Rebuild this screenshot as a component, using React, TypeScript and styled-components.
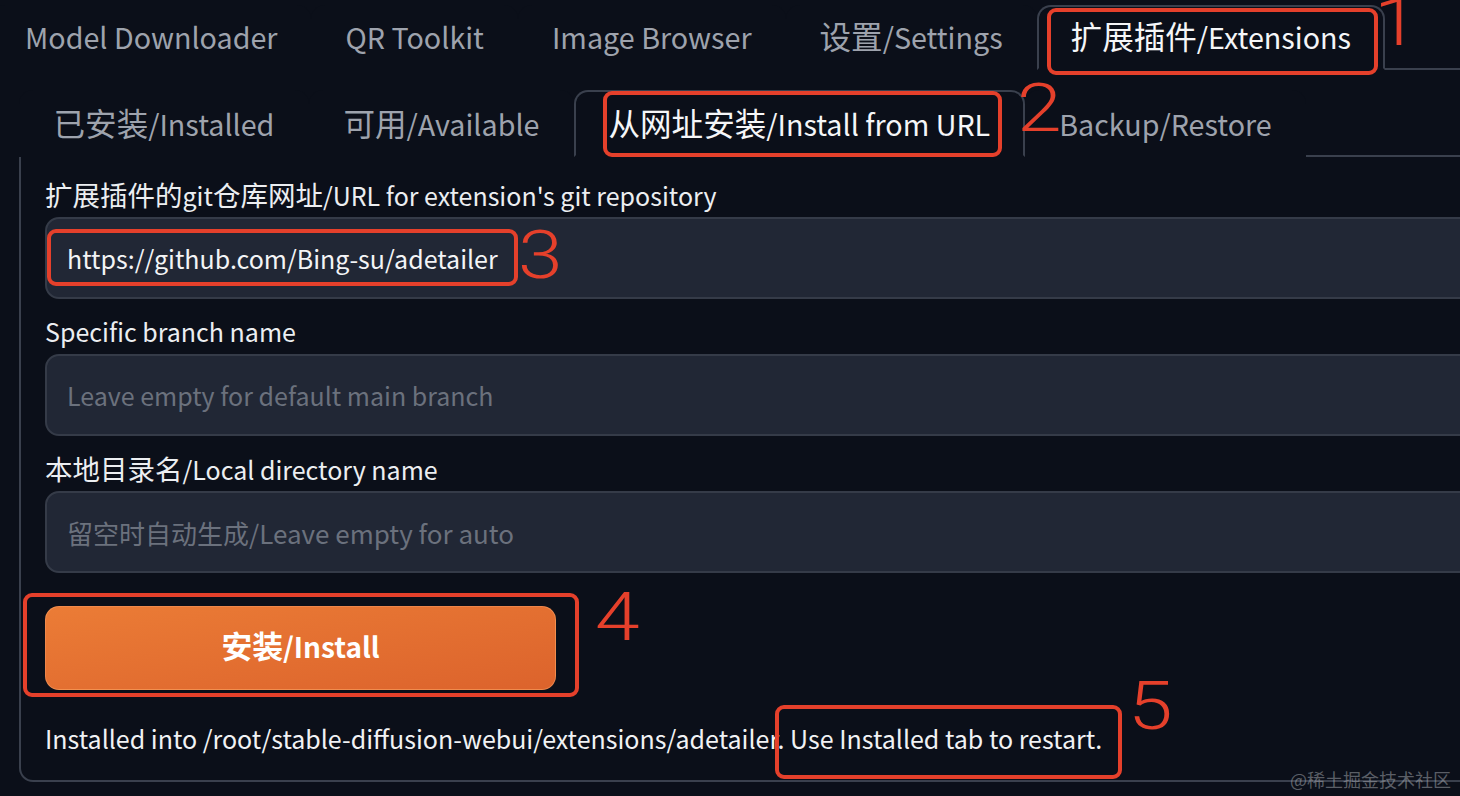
import React from "react";
import styled, { createGlobalStyle } from "styled-components";

const GlobalStyle = createGlobalStyle`
  html, body { margin: 0; padding: 0; background: #0b0f19; }
  body { font-family: "Noto Sans CJK SC", "Noto Sans", sans-serif; }
  #root { width: 1460px; height: 796px; }
`;

const Page = styled.div`
  position: relative;
  width: 1460px;
  height: 796px;
  overflow: hidden;
  background: #0b0f19;
  padding-top: 5px;
  box-sizing: border-box;
`;

const TopNav = styled.nav`
  display: flex;
  height: 63px;
  margin-left: -9px;
  border-bottom: 2px solid #3a404d;
`;

const Tab = styled.div<{ $active?: boolean; $shift: number; $pad: number }>`
  box-sizing: border-box;
  height: calc(100% + 2px);
  margin-bottom: -2px;
  padding: 0 ${(p) => p.$pad}px ${(p) => p.$shift}px;
  display: flex;
  align-items: center;
  white-space: nowrap;
  font-size: 28.7px;
  color: ${(p) => (p.$active ? "#f5f6f8" : "#9ea3ad")};
  border: 2px solid ${(p) => (p.$active ? "#3a404d" : "transparent")};
  border-bottom-color: ${(p) => (p.$active ? "#0b0f19" : "transparent")};
  border-radius: 14px 14px 0 0;
  background: #0b0f19;
`;

const TabLabel = styled.span`
  display: block;
  line-height: 34px;
  height: 34px;
`;

const SubNav = styled.nav`
  display: flex;
  height: 65px;
  margin-top: 20px;
  margin-left: 19px;
  border-bottom: 2px solid #3a404d;
`;

const Han = styled.span`
  font-size: 1.1em;
  line-height: 1;
`;

const Panel = styled.section`
  margin-left: 19px;
  width: 1500px;
  box-sizing: border-box;
  border: 2px solid #3a404d;
  border-top: none;
  border-bottom-left-radius: 14px;
  padding: 24px 24px 27px 24px;
  display: flex;
  flex-direction: column;
`;

const Fields = styled.div`
  display: flex;
  flex-direction: column;
  gap: 19px;
`;

const Field = styled.label`
  display: flex;
  flex-direction: column;
  gap: 10px;
`;

const LabelText = styled.span`
  display: block;
  height: 26px;
  font-size: 25px;
  line-height: 26px;
  color: #eceef1;
  white-space: nowrap;
`;

const TextInput = styled.input<{ $size: number }>`
  box-sizing: border-box;
  height: 82px;
  width: 100%;
  padding: 0 20px;
  border-radius: 14px;
  border: 2px solid #353b48;
  background: #212735;
  color: #f3f4f6;
  font-family: "Noto Sans CJK SC", "Noto Sans", sans-serif;
  font-size: ${(p) => p.$size}px;
  outline: none;
  &::placeholder { color: #6b717d; }
`;

const InstallButton = styled.button`
  margin-top: 33px;
  width: 511px;
  height: 84px;
  padding: 0 0 5px;
  border-radius: 14px;
  border: 1px solid rgba(255, 170, 110, 0.45);
  background: linear-gradient(to bottom right, #eb7c36, #dc632c);
  color: #ffffff;
  font-family: "Noto Sans CJK SC", "Noto Sans", sans-serif;
  font-size: 28px;
  font-weight: 700;
  cursor: pointer;
`;

const Result = styled.p`
  margin: 33px 0 0;
  font-size: 25px;
  line-height: 30px;
  color: #f1f2f4;
  white-space: nowrap;
`;

const Mark = styled.div<{ $x: number; $y: number; $w: number; $h: number }>`
  position: absolute;
  left: ${(p) => p.$x}px;
  top: ${(p) => p.$y}px;
  width: ${(p) => p.$w}px;
  height: ${(p) => p.$h}px;
  box-sizing: border-box;
  border: 4px solid #e5402b;
  border-radius: 9px;
  pointer-events: none;
`;

const Num = styled.span<{ $x: number; $y: number }>`
  position: absolute;
  left: ${(p) => p.$x}px;
  top: ${(p) => p.$y}px;
  font-family: Roboto, "Liberation Sans", sans-serif;
  font-weight: 300;
  font-size: 66px;
  line-height: 1;
  color: #e5402b;
  transform: scaleX(1.22);
  transform-origin: left top;
`;

const Watermark = styled.span`
  position: absolute;
  right: 9px;
  bottom: 7px;
  font-size: 18px;
  line-height: 20px;
  color: rgba(170, 173, 180, 0.5);
  font-family: "Noto Sans CJK SC", sans-serif;
`;

const CJK = /([\u2e80-\u9fff\uff00-\uffef]+)/;

function T({ children }: { children: string }) {
  const parts = children.split(CJK).filter(Boolean);
  return (
    <>
      {parts.map((s, i) => (CJK.test(s) ? <Han key={i}>{s}</Han> : <React.Fragment key={i}>{s}</React.Fragment>))}
    </>
  );
}

const topTabs = ["Model Downloader", "QR Toolkit", "Image Browser", "设置/Settings", "扩展插件/Extensions"];
const subTabs = ["已安装/Installed", "可用/Available", "从网址安装/Install from URL", "Backup/Restore"];

export default function App() {
  return (
    <>
      <GlobalStyle />
      <Page>
        <TopNav>
          {topTabs.map((t, i) => (
            <Tab key={t} $shift={2} $pad={32} $active={i === topTabs.length - 1}>
              <TabLabel><T>{t}</T></TabLabel>
            </Tab>
          ))}
        </TopNav>
        <SubNav>
          {subTabs.map((t, i) => (
            <Tab key={t} $shift={0} $pad={32.5} $active={i === 2}>
              <TabLabel><T>{t}</T></TabLabel>
            </Tab>
          ))}
        </SubNav>
        <Panel>
          <Fields>
            <Field>
              <LabelText><T>扩展插件的git仓库网址/URL for extension's git repository</T></LabelText>
              <TextInput $size={25} readOnly defaultValue="https://github.com/Bing-su/adetailer" />
            </Field>
            <Field>
              <LabelText>Specific branch name</LabelText>
              <TextInput $size={25} readOnly placeholder="Leave empty for default main branch" />
            </Field>
            <Field>
              <LabelText><T>本地目录名/Local directory name</T></LabelText>
              <TextInput $size={26} readOnly placeholder="留空时自动生成/Leave empty for auto" />
            </Field>
          </Fields>
          <InstallButton><T>安装/Install</T></InstallButton>
          <Result>
            Installed into /root/stable-diffusion-webui/extensions/adetailer. Use Installed tab to restart.
          </Result>
        </Panel>

        <Mark $x={1047} $y={8} $w={331} $h={67} />
        <Num $x={1374} $y={-10}>1</Num>
        <Mark $x={603} $y={91} $w={399} $h={66} />
        <Num $x={1017} $y={76}>2</Num>
        <Mark $x={47} $y={229} $w={471} $h={57} />
        <Num $x={518} $y={223}>3</Num>
        <Mark $x={23} $y={593} $w={556} $h={104} />
        <Num $x={595} $y={585}>4</Num>
        <Mark $x={775} $y={705} $w={347} $h={74} />
        <Num $x={1128} $y={674}>5</Num>

        <Watermark>@稀土掘金技术社区</Watermark>
      </Page>
    </>
  );
}
